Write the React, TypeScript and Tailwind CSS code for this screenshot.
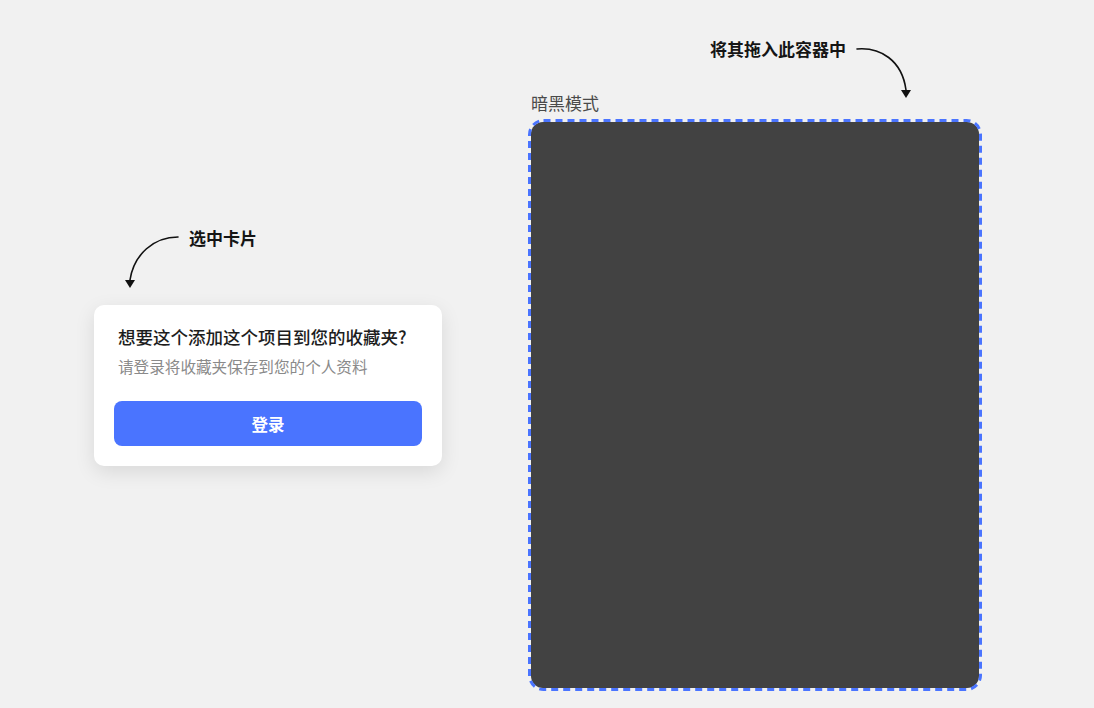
import React from "react";

const font = { fontFamily: '"Noto Sans CJK SC", "Noto Sans", sans-serif' };

function ArrowLeft() {
  return (
    <svg className="absolute left-[120px] top-[230px]" width="70" height="65" viewBox="0 0 70 65" fill="none">
      <path d="M58 7 C 34 7, 14 24, 10 50" stroke="#111" strokeWidth="1.6" fill="none" strokeLinecap="round" />
      <path d="M5 50 L15 50 L10 58 Z" fill="#111" />
    </svg>
  );
}

function ArrowRight() {
  return (
    <svg className="absolute left-[850px] top-[40px]" width="70" height="65" viewBox="0 0 70 65" fill="none">
      <path d="M7 9 C 30 7, 52 20, 56 50" stroke="#111" strokeWidth="1.6" fill="none" strokeLinecap="round" />
      <path d="M51 50 L61 50 L56 58 Z" fill="#111" />
    </svg>
  );
}

export default function App() {
  return (
    <div className="relative w-full h-[708px] overflow-hidden bg-[#f1f1f1]" style={font}>
      <div className="flex items-start h-full">
        <div className="ml-[94px] mt-[305px] w-[348px] rounded-[10px] bg-white px-[20px] pt-[20px] pb-[20px] shadow-[0_6px_20px_rgba(0,0,0,0.10)]">
          <div className="pl-[4px] text-[17.5px] leading-[24px] font-medium text-[#1d1d1d]">想要这个添加这个项目到您的收藏夹?</div>
          <div className="pl-[4px] mt-[6px] text-[15.6px] leading-[22px] text-[#8a8a8a]">请登录将收藏夹保存到您的个人资料</div>
          <button className="mt-[24px] w-full h-[45px] rounded-[8px] bg-[#4a74ff] text-white text-[16.5px] leading-[24px] font-bold">登录</button>
        </div>
        <div className="ml-[86px] mt-[92px] flex flex-col">
          <div className="pl-[3px] text-[17px] leading-[22px] text-[#4a4a4a]">暗黑模式</div>
          <div className="relative mt-[5px] w-[454px] h-[572px] p-[3px]">
            <div className="w-full h-full rounded-[12px] bg-[#424242]" />
            <svg className="absolute inset-0 pointer-events-none" width="454" height="572" viewBox="0 0 454 572" fill="none">
              <rect x="1.5" y="1.5" width="451" height="569" rx="14" ry="14" stroke="#4a74ff" strokeWidth="3" strokeDasharray="7 5" fill="none" />
            </svg>
          </div>
        </div>
      </div>
      <div className="absolute left-[189px] top-[226px] text-[17px] leading-[24px] font-bold text-[#151515]">选中卡片</div>
      <div className="absolute left-[710px] top-[37px] text-[17px] leading-[24px] font-bold text-[#151515]">将其拖入此容器中</div>
      <ArrowLeft />
      <ArrowRight />
    </div>
  );
}
